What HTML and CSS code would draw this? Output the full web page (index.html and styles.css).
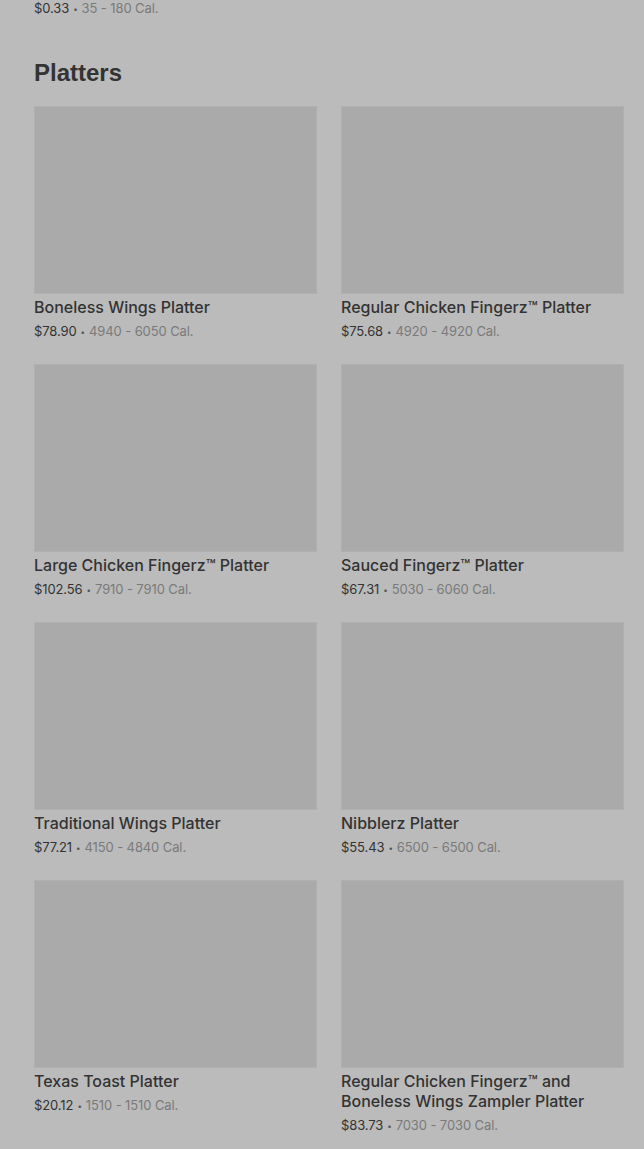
FILE: index.html
```html
<!DOCTYPE html>
<html lang="en">
<head>
  <meta charset="UTF-8">
  <title>Platters</title>
  <link rel="stylesheet" href="styles.css">
</head>
<body>
  <div class="page">
    <div class="meta prev"><span class="price">$0.33</span><span class="dot">•</span><span class="cal">35 - 180 Cal.</span></div>

    <h2 class="section-title">Platters</h2>

    <div class="grid">
      <div class="item">
        <div class="thumb"></div>
        <div class="name">Boneless Wings Platter</div>
        <div class="meta"><span class="price">$78.90</span><span class="dot">•</span><span class="cal">4940 - 6050 Cal.</span></div>
      </div>
      <div class="item">
        <div class="thumb"></div>
        <div class="name">Regular Chicken Fingerz™ Platter</div>
        <div class="meta"><span class="price">$75.68</span><span class="dot">•</span><span class="cal">4920 - 4920 Cal.</span></div>
      </div>
      <div class="item">
        <div class="thumb"></div>
        <div class="name">Large Chicken Fingerz™ Platter</div>
        <div class="meta"><span class="price">$102.56</span><span class="dot">•</span><span class="cal">7910 - 7910 Cal.</span></div>
      </div>
      <div class="item">
        <div class="thumb"></div>
        <div class="name">Sauced Fingerz™ Platter</div>
        <div class="meta"><span class="price">$67.31</span><span class="dot">•</span><span class="cal">5030 - 6060 Cal.</span></div>
      </div>
      <div class="item">
        <div class="thumb"></div>
        <div class="name">Traditional Wings Platter</div>
        <div class="meta"><span class="price">$77.21</span><span class="dot">•</span><span class="cal">4150 - 4840 Cal.</span></div>
      </div>
      <div class="item">
        <div class="thumb"></div>
        <div class="name">Nibblerz Platter</div>
        <div class="meta"><span class="price">$55.43</span><span class="dot">•</span><span class="cal">6500 - 6500 Cal.</span></div>
      </div>
      <div class="item">
        <div class="thumb"></div>
        <div class="name">Texas Toast Platter</div>
        <div class="meta"><span class="price">$20.12</span><span class="dot">•</span><span class="cal">1510 - 1510 Cal.</span></div>
      </div>
      <div class="item">
        <div class="thumb"></div>
        <div class="name">Regular Chicken Fingerz™ and Boneless Wings Zampler Platter</div>
        <div class="meta"><span class="price">$83.73</span><span class="dot">•</span><span class="cal">7030 - 7030 Cal.</span></div>
      </div>
    </div>
  </div>
</body>
</html>
```

FILE: styles.css
```css
body { margin: 0; background: #bbbbbb; font-family: "Inter", "Roboto", sans-serif; color: #333333; }
.page { padding: 0 20px 0 34px; margin-top: -2px; }
.meta { height: 20px; font-size: 13px; line-height: 20px; color: #333333; letter-spacing: -0.1px; }
.meta .cal { color: #7a7a7a; }
.meta .dot { font-size: 8px; line-height: 0; margin: 0 4px; color: #555555; vertical-align: 1px; }
.prev { margin-bottom: 41px; }
.section-title { margin: 0 0 19px; font-family: "Liberation Sans", Arial, sans-serif; font-size: 24px; font-weight: bold; line-height: 28px; color: #333333; }
.grid { display: grid; grid-template-columns: 1fr 1fr; column-gap: 24px; row-gap: 23px; }
.thumb { height: 188px; background: #aaaaaa; box-shadow: inset 0 0 0 1px #b0b0b0; margin-bottom: 3px; }
.name { font-size: 16px; font-weight: 500; line-height: 20px; margin-bottom: 4px; color: #333333; }
```
